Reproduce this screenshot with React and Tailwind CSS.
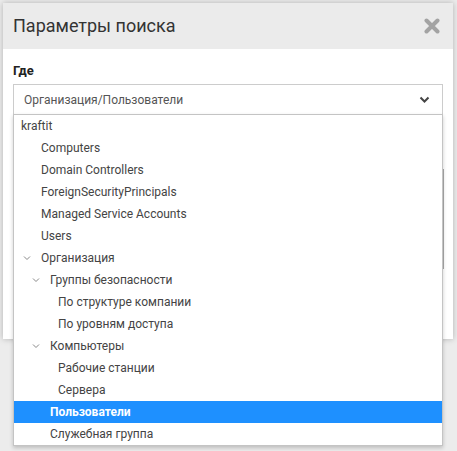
import { useState } from 'react';

const NODES = [
  { label: 'kraftit', pad: 'pl-[7px]' },
  { label: 'Computers', pad: 'pl-[27px]' },
  { label: 'Domain Controllers', pad: 'pl-[27px]' },
  { label: 'ForeignSecurityPrincipals', pad: 'pl-[27px]' },
  { label: 'Managed Service Accounts', pad: 'pl-[27px]' },
  { label: 'Users', pad: 'pl-[27px]' },
  { label: 'Организация', pad: 'pl-[27px]', caret: 'left-[9px]' },
  { label: 'Группы безопасности', pad: 'pl-[36px]', caret: 'left-[18px]' },
  { label: 'По структуре компании', pad: 'pl-[44px]' },
  { label: 'По уровням доступа', pad: 'pl-[44px]' },
  { label: 'Компьютеры', pad: 'pl-[36px]', caret: 'left-[18px]' },
  { label: 'Рабочие станции', pad: 'pl-[44px]' },
  { label: 'Сервера', pad: 'pl-[44px]' },
  { label: 'Пользователи', pad: 'pl-[36px]' },
  { label: 'Служебная группа', pad: 'pl-[36px]' },
];

function Caret({ className }) {
  return (
    <svg className={className} width="8" height="6" viewBox="0 0 8 6" fill="none">
      <path d="M1 1.5 L4 4.5 L7 1.5" stroke="#888" strokeWidth="1" />
    </svg>
  );
}

export default function App() {
  const [selected, setSelected] = useState('Пользователи');

  return (
    <div
      className="relative w-[457px] h-[451px] overflow-hidden bg-[#ececec] pt-[3px] pl-[3px]"
      style={{ fontFamily: 'Roboto, "Noto Sans", sans-serif' }}
    >
      {/* dialog */}
      <div className="relative w-[450px] h-[336px] bg-white shadow-[0_0_6px_rgba(0,0,0,0.25)]">
        <div className="flex items-center justify-between h-[46px] bg-[#ebebeb] pl-[10px] pr-[13px]">
          <span className="text-[18px] text-[#333] leading-none">Параметры поиска</span>
          <svg width="16" height="16" viewBox="0 0 16 16">
            <path d="M2.5 2.5 L13.5 13.5 M13.5 2.5 L2.5 13.5" stroke="#a3a3a3" strokeWidth="4" strokeLinecap="round" />
          </svg>
        </div>

        <div className="px-[10px] pt-[14px]">
          <div className="text-[13px] font-bold text-[#222] leading-[16px]">Где</div>
          <div className="relative mt-[5px]">
            <div className="flex items-center justify-between h-[31px] border border-[#ccc] bg-white pl-[10px] pr-[12px]">
              <span className="text-[12px] text-[#555]">Организация/Пользователи</span>
              <svg width="11" height="8" viewBox="0 0 11 8" fill="none">
                <path d="M1.5 1.5 L5.5 5.5 L9.5 1.5" stroke="#444" strokeWidth="2" />
              </svg>
            </div>

            {/* faded fields underneath the tree popup */}
            <div className="absolute left-0 right-[-1px] top-[85px] h-[100px] border-r-2 border-[#aaa]" />

            {/* tree popup */}
            <div className="absolute left-0 top-[30px] w-[430px] z-10 border border-[#c4c4c4] bg-white shadow-[0_2px_4px_rgba(0,0,0,0.2)]">
              {NODES.map(n => (
                <div
                  key={n.label}
                  onClick={() => setSelected(n.label)}
                  className={`relative flex items-center h-[22px] text-[12px] cursor-pointer ${n.pad} ${
                    selected === n.label ? 'bg-[#1e90ff] text-white font-bold' : 'text-[#444]'
                  }`}
                >
                  {n.caret && <Caret className={`absolute top-[8px] ${n.caret}`} />}
                  {n.label}
                </div>
              ))}
            </div>
          </div>
        </div>
      </div>
    </div>
  );
}
